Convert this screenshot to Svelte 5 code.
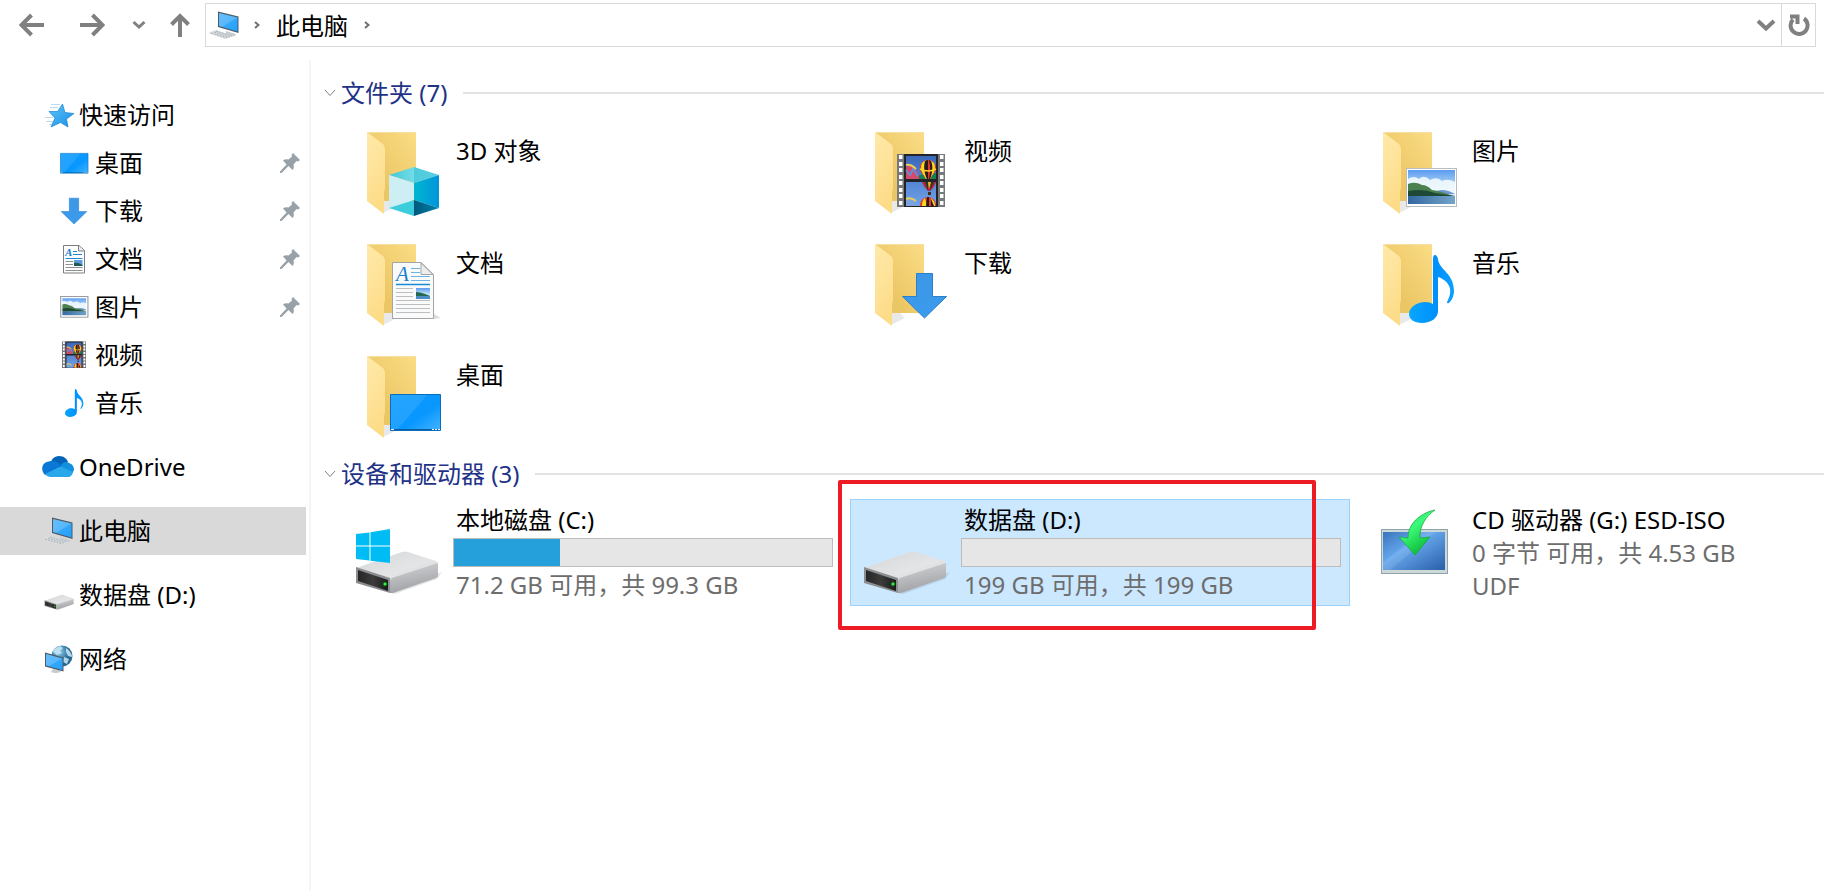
<script lang="ts">
	type Place = { name: string; icon: string; child?: boolean; pinned?: boolean; gap?: boolean; active?: boolean };
	type Drive = { name: string; icon: string; used?: number; lines: string[]; selected?: boolean; marked?: boolean };

	const places: Place[] = [
		{ name: '快速访问', icon: 'star' },
		{ name: '桌面', icon: 'desktop', child: true, pinned: true },
		{ name: '下载', icon: 'download', child: true, pinned: true },
		{ name: '文档', icon: 'document', child: true, pinned: true },
		{ name: '图片', icon: 'picture', child: true, pinned: true },
		{ name: '视频', icon: 'film', child: true },
		{ name: '音乐', icon: 'music', child: true },
		{ name: 'OneDrive', icon: 'cloud', gap: true },
		{ name: '此电脑', icon: 'pc', gap: true, active: true },
		{ name: '数据盘 (D:)', icon: 'drive', gap: true },
		{ name: '网络', icon: 'network', gap: true }
	];

	const folders = [
		{ name: '3D 对象', icon: 'cube' },
		{ name: '视频', icon: 'film' },
		{ name: '图片', icon: 'picture' },
		{ name: '文档', icon: 'document' },
		{ name: '下载', icon: 'download' },
		{ name: '音乐', icon: 'music' },
		{ name: '桌面', icon: 'desktop' }
	];

	const drives: Drive[] = [
		{ name: '本地磁盘 (C:)', icon: 'system', used: 28, lines: ['71.2 GB 可用，共 99.3 GB'] },
		{ name: '数据盘 (D:)', icon: 'drive', used: 0, lines: ['199 GB 可用，共 199 GB'], selected: true, marked: true },
		{ name: 'CD 驱动器 (G:) ESD-ISO', icon: 'disc', lines: ['0 字节 可用，共 4.53 GB', 'UDF'] }
	];

	// the sidebar shows the same art as the tiles, cropped to the part without the folder
	const crops: Record<string, string> = {
		desktop: '39 35 58 58',
		download: '42 32 55 55',
		picture: '39 35 58 58',
		film: '34 25 64 64',
		music: '29 14 78 78',
		drive: '2 2 90 90'
	};

	let showFolders = $state(true);
	let showDrives = $state(true);
</script>

{#snippet folderArt()}
	<path d="M36 89 L50 82 L44 76 L36 77Z" fill="#e9e9e9" />
	<path d="M20 8H69V77H20Z" fill="url(#folder-back)" />
	<path d="M20 8H69V9H20Z" fill="#f6dfa0" />
	<path d="M20 8 L36 20 Q38 22 38 25 V64 L37 68 V90 L20 77Z" fill="url(#folder-front)" />
{/snippet}

{#snippet driveArt()}
	<path d="M43 88 L90 69 L95 67 L90 74 L48 89Z" fill="#000" opacity="0.1" />
	<path d="M9 63 L55 47 Q58 46 61 47 L89 56 Q91 57 91 59 L43 75Z" fill="url(#drive-top)" />
	<path d="M43 76 Q43 73 48 72 L91 58 V71 Q91 72 89 73 L46 88 L43 88Z" fill="url(#drive-side)" />
	<path d="M9 62 L43 73 V88 L9 78Z" fill="#8b8d90" />
	<path d="M11 65 L41 75 V86 L11 76Z" fill="url(#drive-front)" />
	<circle cx="38" cy="79" r="2.4" fill="#0a5c12" />
	<circle cx="38" cy="79" r="1.5" fill="#35f04a" />
{/snippet}

{#snippet balloon(x: number, y: number)}
	<g transform="translate({x} {y})">
		<path d="M-8 0 A8 8 0 0 1 8 0 C8 5 3 8 2 11 H-2 C-3 8 -8 5 -8 0Z" fill="#e8372c" />
		<path d="M-6 -5 C-9 2 -4 7 -2 11 H-1 C-4 5 -5 -2 -2 -8Z M6 -5 C9 2 4 7 2 11 H1 C4 5 5 -2 2 -8Z" fill="#ffd91c" />
		<path d="M-3 -7 C-5 1 -2 8 -1 11 H0 V-8Z" fill="#241d1b" />
		<path d="M1 -8 C3 0 2 6 1 11 H2 C5 4 5 -3 3 -7Z" fill="#241d1b" />
		<path d="M-8 1 Q0 5 8 1" stroke="#ffd91c" stroke-width="1.5" fill="none" />
	</g>
{/snippet}

{#snippet art(name: string)}
	{#if name === 'cube'}
		<path d="M67 43 L92 51 L67 59 L42 51Z" fill="url(#cube-top)" />
		<path d="M42 51 L67 59 V76 L42 84Z" fill="#cdeff3" />
		<path d="M67 59 L92 51 V84 L67 76Z" fill="url(#cube-right)" />
		<path d="M42 84 L67 76 V92Z" fill="#3ccddd" />
		<path d="M67 76 L92 84 L67 92Z" fill="url(#cube-dark)" />
	{:else if name === 'film'}
		<path d="M42 30H90V83H42Z" fill="#77797b" />
		<path d="M49 30H83V83H49Z" fill="#232427" />
		<path d="M51 32H81V55H51Z M51 58H81V82H51Z" fill="url(#film-sky)" />
		<path d="M51 50 Q57 44 64 51 L81 49 V55 H51Z" fill="#148053" />
		<path d="M51 43 L55 41 L60 44 L64 51 V55 H51Z" fill="#d44a69" />
		<path d="M51 46 L55 51 L58 45 L63 52" stroke="#6a8ad5" stroke-width="2" fill="none" />
		<path d="M51 41 Q56 40 61 45" stroke="#e9cf58" stroke-width="2" fill="none" />
		{@render balloon(73, 44)}
		<path d="M67 58H81Q79 64 75 67H73Q69 63 67 58Z" fill="#ba2438" />
		<path d="M70 58H73V67Z M76 58H79L75 67Z" fill="#1f3d22" />
		<path d="M73 58H76L74 65Z" fill="#eebb29" />
		<path d="M73 68H76V71H73Z" fill="#442b1b" />
		<path d="M51 75 Q56 73 61 78 L64 82H51Z" fill="#7ca4dc" />
		<path d="M51 75 Q56 73 61 77" stroke="#e9cf58" stroke-width="2" fill="none" />
		<path d="M65 82 C65 70 81 70 81 82Z" fill="#e8372c" />
		<path d="M67 82 Q67 76 70 74 L72 82Z M76 74 Q80 77 80 82H77Z" fill="#ffd91c" />
		<path d="M72 73H74V82H71Z M76 75L79 82H76Z" fill="#241d1b" />
		{#each [31, 38, 44, 51, 57, 64, 70, 77] as y}
			<path d="M44 {y}h3.5v4h-3.5Z" fill="#fff" />
			<path d="M85 {y}h3.5v4h-3.5Z" fill="#fff" />
		{/each}
	{:else if name === 'picture'}
		<path d="M43 44H94V83H43Z" fill="#b9bbbd" />
		<path d="M44 45H93V82H44Z" fill="#fff" />
		<path d="M45 46H92V80H45Z" fill="url(#picture-sky)" />
		<path d="M45 55 Q51 51 56 55 Q61 50 67 56 Q74 52 79 57 Q85 54 92 58 V70H45Z" fill="#f2f9fd" opacity="0.9" />
		<path d="M69 70 Q78 62 92 70Z" fill="#6f97d2" />
		<path d="M45 60 Q52 57 59 61 Q64 61 69 66 Q78 67 90 72 H45Z" fill="#4b8151" />
		<path d="M45 67 Q60 64 72 69 L92 72 H45Z" fill="#1f4937" />
		<path d="M45 72H92V80H45Z" fill="url(#picture-sea)" />
	{:else if name === 'document'}
		<path d="M87 78 L94 82 L87 83Z" fill="#ddd" />
		<path d="M45.5 26.5H74L86.5 38.5V82.5H45.5Z" fill="#fafafa" stroke="#a3a5a8" />
		<path d="M74 27V38.5H86Z" fill="#ededed" stroke="#a3a5a8" />
		<text x="49" y="45" class="doc-letter">A</text>
		<path d="M64 32.5H73 M64 36.5H73 M64 40.5H83 M64 44.5H83" stroke="#6db4e6" />
		<path d="M49 48.5H83" stroke="#1b8ad6" stroke-width="1.5" />
		<path d="M49 52.5H66 M49 56.5H66 M49 60.5H66 M49 64.5H83 M49 68.5H83 M49 72.5H83 M49 76.5H83" stroke="#bcbfc2" />
		<path d="M69 52H83V63H69Z" fill="url(#picture-sky)" />
		<path d="M69 56 Q74 56 83 60 H69Z" fill="#26694f" />
		<path d="M69 60H83V63H69Z" fill="#4d8ec4" />
	{:else if name === 'download'}
		<path d="M61.5 37.5H77.5V60.5H91.5L69.5 82 L47.5 60.5H61.5Z" fill="url(#arrow-blue)" stroke="#2b7fcf" />
	{:else if name === 'music'}
		<path d="M70 23 Q70 19 72 19 Q74 19 75 23 C76 34 91 37 91 55 Q91 62 86 67 Q84 68 84 66 C92 52 84 44 75 41 V75 C75 82 68 87 59 87 C51 87 46 83 46 78 C46 71 54 66 62 66 Q67 66 70 68Z" fill="url(#note-blue)" />
	{:else if name === 'desktop'}
		<path d="M43.5 46.5H93.5V82.5H43.5Z" fill="url(#screen-blue)" stroke="#0b6cb8" />
		<path d="M44 47H80L50 82H44Z" fill="#fff" opacity="0.1" />
		<path d="M44 81.5H93" stroke="#0b5b9d" />
		<path d="M44 81.5H47 M85 81.5H87 M88 81.5H90 M91 81.5H93" stroke="#e9f5ff" />
	{:else if name === 'drive'}
		{@render driveArt()}
	{:else if name === 'system'}
		{@render driveArt()}
		<path d="M9 29 L22.5 27.5 V40.5 H9Z M23.5 27.2 L43 24 V40.5 H23.5Z M9 41.5 H22.5 V55.5 L9 54Z M23.5 41.5 H43 V58 L23.5 55.7Z" fill="#00bcf4" />
	{:else if name === 'disc'}
		<path d="M18 24H85V69H18Z" fill="#8fa3a8" />
		<path d="M19 25H84V68H19Z" fill="#ccd9d8" />
		<path d="M20 27H82V65H20Z" fill="url(#disc-screen)" />
		<path d="M20 58 L58 27 H72 L27 65 H20Z" fill="#fff" opacity="0.1" />
		<path d="M72 5 C61 7 45 16 45 33 L36 32 L52 50 L67 32 L57 33 C56 22 63 11 72 5Z" fill="url(#arrow-green)" stroke="#12a640" stroke-width="0.7" />
	{/if}
{/snippet}

{#snippet monitor()}
	<path d="M18 22 L28 25 L27 27 Q21 28 18 25Z" fill="#c6cbd0" />
	<path d="M10 2.5 L30.5 7.5 V24 L10 18Z" fill="#4d5a64" />
	<path d="M11 4 L29.5 8.5 V22.5 L11 17Z" fill="url(#monitor-blue)" />
	<path d="M11 4 L29.5 8.5 L14 18 L11 17Z" fill="#fff" opacity="0.18" />
	<path d="M0 24 L8 21 L26 27 L17 30Z" fill="#d9dde0" />
	<path d="M3 24 L20 29 M6 23 L22 28 M8 22 L24 27" stroke="#a0a8ae" stroke-width="0.8" stroke-dasharray="2 1" />
{/snippet}

{#snippet smallIcon(name: string)}
	<svg class="small-icon" viewBox={crops[name] ?? '0 0 32 32'} aria-hidden="true">
		{#if name === 'star'}
			<path d="M9 5.5H18 M8 8.5H16 M3 18.5H11 M4 22.5H11 M7 25.5H10" stroke="#b9dcf4" stroke-width="1" />
			<path d="M20.5 5 L23 13.5 L32 14.5 L24.5 20 L26 28 L18.500 23.5 L9 28 L13 19 L7 12.5 L15.5 12.5Z" fill="url(#star-blue)" stroke="#1b83cf" stroke-width="0.7" />
		{:else if name === 'document'}
			<path d="M5.5 2.5H21 L26.5 7.5 V30 H5.5Z" fill="#fdfdfd" stroke="#7b7e81" />
			<path d="M20.500 3V8H26" fill="#ededed" stroke="#7b7e81" />
			<text x="7" y="13" class="doc-letter small">A</text>
			<path d="M15 8.5H19 M15 11.5H24 M7.5 15.5H24.5" stroke="#1b8ad6" />
			<path d="M7.5 18.5H15 M7.5 21.5H15 M7.5 24.5H24.5 M7.5 27.5H24.5" stroke="#8f9295" />
			<path d="M16 17H24.5V23H16Z" fill="#5b9be0" />
			<path d="M16 20 Q20 19 24.5 22 V23H16Z" fill="#1f5a55" />
		{:else if name === 'cloud'}
			<path d="M9 12 C9 8 13 5 17 5 C22 5 25 8 26 11 L20 15 L9 12Z" fill="#0364b8" />
			<path d="M20 13 C21 11 25 10 27 12 C30 13 32 15 32 19 L30 23 L16 16Z" fill="#148fdf" />
			<path d="M3 24 C-2 19 0 11 7 10.5 C12 9 16 11 20 15 L3 24Z" fill="#0a78d4" />
			<path d="M3 23 L19 15.5 L31 21 C30 25 28 26 26 26 H8 Q5 26 3 23Z" fill="#28a8ea" />
		{:else if name === 'pc'}
			{@render monitor()}
		{:else if name === 'network'}
			<circle cx="20" cy="13" r="10.5" fill="url(#globe)" />
			<path d="M12 6 L18 3 L21 5 L18 8 L20 10 L15 12 L11 9Z M24 5 Q30 9 30 14 L26 13 L24 9Z M22 14 L27 16 L25 21 L21 19Z" fill="#c9e5f3" opacity="0.85" />
			<path d="M11 26 L17 27 L19 29 Q13 31 9 29Z" fill="#c6cbd0" />
			<path d="M3 9.5 L21.5 14.5 V28.5 L3 23.5Z" fill="#4d5a64" />
			<path d="M4 11 L20.5 15.5 V27 L4 22.5Z" fill="url(#monitor-blue)" />
			<path d="M4 11 L20.5 15.5 L7 23 L4 22.5Z" fill="#fff" opacity="0.18" />
		{:else}
			{@render art(name)}
			{#if name === 'picture'}
				<path d="M44 45H93V82H44Z" fill="none" stroke="#9a9da0" stroke-width="2" />
				<path d="M46 47H91V80H46Z" fill="none" stroke="#fff" stroke-width="2" />
			{/if}
		{/if}
	</svg>
{/snippet}

{#snippet groupHeader(title: string, count: number, open: boolean, toggle: () => void)}
	<button class="group-header" aria-expanded={open} onclick={toggle}>
		<svg class="group-chevron" viewBox="0 0 12 8" aria-hidden="true"><path d="M1 1 L6 6.5 L11 1" /></svg>
		<span class="label">{title} ({count})</span>
		<span class="rule"></span>
	</button>
{/snippet}

<svg class="defs" width="0" height="0" aria-hidden="true">
	<defs>
		<linearGradient id="folder-back" x1="0" y1="1" x2="1" y2="0"><stop offset="0.3" stop-color="#ebc664" /><stop offset="1" stop-color="#fbdd86" /></linearGradient>
		<linearGradient id="folder-front" x1="0" y1="0" x2="0.3" y2="1"><stop offset="0" stop-color="#ffe9a8" /><stop offset="0.5" stop-color="#fee39a" /><stop offset="1" stop-color="#fddc88" /></linearGradient>
		<linearGradient id="drive-top" x1="0" y1="0" x2="1" y2="1"><stop offset="0" stop-color="#d4d5d7" /><stop offset="0.6" stop-color="#e4e5e7" /><stop offset="1" stop-color="#cfd0d2" /></linearGradient>
		<linearGradient id="drive-side" x1="0" y1="0" x2="0.3" y2="1"><stop offset="0" stop-color="#d6d7d9" /><stop offset="1" stop-color="#9fa1a4" /></linearGradient>
		<linearGradient id="drive-front"><stop offset="0" stop-color="#262626" /><stop offset="0.5" stop-color="#3c3c3c" /><stop offset="1" stop-color="#1b1b1b" /></linearGradient>
		<linearGradient id="cube-top"><stop offset="0" stop-color="#3fc8d8" /><stop offset="0.5" stop-color="#74dce6" /><stop offset="0.51" stop-color="#4dcbdc" /><stop offset="1" stop-color="#5acfe0" /></linearGradient>
		<linearGradient id="cube-right"><stop offset="0" stop-color="#00b6d0" /><stop offset="1" stop-color="#0094da" /></linearGradient>
		<linearGradient id="cube-dark"><stop offset="0" stop-color="#00587c" /><stop offset="1" stop-color="#0083ae" /></linearGradient>
		<linearGradient id="film-sky" x1="0" y1="0" x2="0" y2="1"><stop offset="0" stop-color="#3b67b9" /><stop offset="1" stop-color="#6fa3ea" /></linearGradient>
		<linearGradient id="picture-sky" x1="0" y1="0" x2="0" y2="1"><stop offset="0" stop-color="#5a9bf0" /><stop offset="0.5" stop-color="#b9dcf7" /><stop offset="1" stop-color="#e3f2fa" /></linearGradient>
		<linearGradient id="picture-sea"><stop offset="0" stop-color="#33679f" /><stop offset="1" stop-color="#75a5c9" /></linearGradient>
		<linearGradient id="arrow-blue" x1="0" y1="0" x2="0" y2="1"><stop offset="0" stop-color="#3d97e6" /><stop offset="1" stop-color="#3a9bed" /></linearGradient>
		<linearGradient id="note-blue"><stop offset="0" stop-color="#07a7ff" /><stop offset="0.6" stop-color="#0090fb" /><stop offset="1" stop-color="#0aa0ff" /></linearGradient>
		<linearGradient id="screen-blue" x1="0" y1="0" x2="1" y2="1"><stop offset="0" stop-color="#0c9bff" /><stop offset="0.6" stop-color="#0797ff" /><stop offset="1" stop-color="#45b3ff" /></linearGradient>
		<linearGradient id="disc-screen" x1="0" y1="0" x2="1" y2="1"><stop offset="0" stop-color="#3974bd" /><stop offset="0.4" stop-color="#66a7ec" /><stop offset="1" stop-color="#2a5ea8" /></linearGradient>
		<linearGradient id="arrow-green" x1="0" y1="0" x2="0.6" y2="1"><stop offset="0" stop-color="#1fce55" /><stop offset="0.45" stop-color="#3dfa7a" /><stop offset="1" stop-color="#08b62f" /></linearGradient>
		<linearGradient id="monitor-blue" x1="0" y1="0" x2="1" y2="1"><stop offset="0" stop-color="#45b0fb" /><stop offset="1" stop-color="#23a0fb" /></linearGradient>
		<linearGradient id="star-blue" x1="0" y1="0" x2="1" y2="1"><stop offset="0" stop-color="#5fc3fb" /><stop offset="1" stop-color="#1990e6" /></linearGradient>
		<radialGradient id="globe" cx="0.35" cy="0.3"><stop offset="0" stop-color="#9fd0ea" /><stop offset="0.6" stop-color="#4b93bd" /><stop offset="1" stop-color="#286a92" /></radialGradient>
	</defs>
</svg>

<div class="explorer">
	<header class="toolbar">
		<button class="nav wide" aria-label="后退">
			<svg width="26" height="24" viewBox="0 0 26 24"><path d="M25 12H3 M12.5 2 L2.5 12 L12.5 22" /></svg>
		</button>
		<button class="nav wide" aria-label="前进">
			<svg width="26" height="24" viewBox="0 0 26 24"><path d="M1 12H23 M13.5 2 L23.5 12 L13.5 22" /></svg>
		</button>
		<button class="nav recent" aria-label="最近浏览的位置">
			<svg width="14" height="10" viewBox="0 0 14 10"><path d="M1.5 2 L7 7 L12.5 2" /></svg>
		</button>
		<button class="nav up" aria-label="向上">
			<svg width="22" height="24" viewBox="0 0 22 24"><path d="M11 24V3 M2.5 11.5 L11 3 L19.5 11.5" /></svg>
		</button>
		<div class="address">
			{@render smallIcon('pc')}
			<svg class="crumb" viewBox="0 0 6 8" aria-hidden="true"><path d="M1 1 L4.5 4 L1 7" /></svg>
			<a class="crumb-name" href="#pc">此电脑</a>
			<svg class="crumb" viewBox="0 0 6 8" aria-hidden="true"><path d="M1 1 L4.5 4 L1 7" /></svg>
			<button class="nav history" aria-label="历史记录">
				<svg width="20" height="14" viewBox="0 0 20 14"><path d="M2 3 L10 10.5 L18 3" /></svg>
			</button>
			<button class="nav refresh" aria-label="刷新">
				<svg width="22" height="24" viewBox="0 0 22 24"><path d="M16 5.5 A8.5 8.5 0 1 1 5 6.5 M2 3.5H9.5 V11" /></svg>
			</button>
		</div>
	</header>

	<div class="body">
		<nav class="sidebar">
			{#each places as place}
				<a class="place" class:child={place.child} class:gap={place.gap} class:active={place.active} href="#{place.icon}">
					{@render smallIcon(place.icon)}
					<span class="label">{place.name}</span>
					{#if place.pinned}
						<svg class="pin" viewBox="0 0 20 20" aria-hidden="true"><path d="M13 0 L20 7 L18 8.5 L16.5 8 L13.5 11.5 Q14.5 15 12.5 17 L8.5 13 L1.5 20 L0 20 V18.5 L6.5 11.5 L3 7.5 Q5.5 5.5 8.5 6.5 L12 3.5 L11.5 2Z" /></svg>
					{/if}
				</a>
			{/each}
		</nav>

		<main class="content">
			<section>
				{@render groupHeader('文件夹', folders.length, showFolders, () => (showFolders = !showFolders))}
				{#if showFolders}
					<div class="tiles">
						{#each folders as folder}
							<a class="tile folder" href="#{folder.icon}">
								<svg class="large-icon" viewBox="0 0 96 96" aria-hidden="true">
									{@render folderArt()}
									{@render art(folder.icon)}
								</svg>
								<span class="info"><span class="line">{folder.name}</span></span>
							</a>
						{/each}
					</div>
				{/if}
			</section>

			<section>
				{@render groupHeader('设备和驱动器', drives.length, showDrives, () => (showDrives = !showDrives))}
				{#if showDrives}
					<div class="tiles">
						{#each drives as drive}
							<a class="tile" class:selected={drive.selected} href="#{drive.icon}">
								<svg class="large-icon" viewBox="0 0 96 96" aria-hidden="true">{@render art(drive.icon)}</svg>
								<span class="info">
									<span class="line">{drive.name}</span>
									{#if drive.used !== undefined}
										<span class="usage" role="meter" aria-label={drive.name} aria-valuemin="0" aria-valuemax="100" aria-valuenow={drive.used}>
											<span class="used" style="width: {drive.used}%"></span>
										</span>
									{/if}
									{#each drive.lines as line}
										<span class="line detail">{line}</span>
									{/each}
								</span>
								{#if drive.marked}<span class="mark"></span>{/if}
							</a>
						{/each}
					</div>
				{/if}
			</section>
		</main>
	</div>
</div>

<style>
	:global(body) { margin: 0; background: #fff; }
	.defs { position: absolute; }
	.explorer {
		display: flex; flex-direction: column; min-height: 100vh; overflow: hidden;
		font-family: "Noto Sans", "Noto Sans CJK SC", sans-serif; font-size: 24px; line-height: 33px; color: #000;
	}
	a { color: inherit; text-decoration: none; }
	button { font: inherit; color: inherit; background: none; border: 0; padding: 0; cursor: pointer; }
	.label { padding-bottom: 2px; }

	.toolbar { display: flex; align-items: center; padding: 3px 8px 13px 2px; }
	.nav { display: flex; align-items: center; justify-content: center; height: 44px; flex: none; }
	.nav svg { fill: none; stroke: #808080; stroke-width: 4; }
	.wide { width: 60px; }
	.recent { width: 33px; }
	.recent svg { stroke-width: 3; }
	.up { width: 50px; }
	.address {
		flex: 1; display: flex; align-items: center; box-sizing: border-box; height: 44px;
		padding-left: 2px; border: 1px solid #d9d9d9;
	}
	.crumb { width: 6px; height: 8px; margin: 0 14px; fill: none; stroke: #707070; stroke-width: 2; }
	.crumb-name { padding: 0 2px; }
	.history { width: 30px; margin-left: auto; }
	.refresh { width: 34px; border-left: 1px solid #d9d9d9; }

	.body { flex: 1; display: flex; }
	.sidebar {
		flex: none; display: flex; flex-direction: column; box-sizing: border-box; width: 311px;
		padding: 31px 3px 0 0; border-right: 2px solid #f5f5f5;
	}
	.place { display: flex; align-items: center; gap: 5px; height: 48px; padding: 0 6px 0 42px; }
	.place:hover { background: #e5f3ff; }
	.child { padding-left: 58px; }
	.gap { margin-top: 16px; }
	.active, .active:hover { background: #d9d9d9; }
	.small-icon { width: 32px; height: 32px; flex: none; }
	.pin { width: 20px; height: 20px; margin-left: auto; fill: #97a1a8; }

	.content { flex: 1; min-width: 0; padding: 8px 0 0 13px; }
	.group-header { display: flex; align-items: center; width: 100%; height: 50px; color: #1e3287; }
	.group-chevron { width: 12px; height: 8px; margin-right: 5px; fill: none; stroke: #808080; stroke-width: 1; }
	.rule { flex: 1; height: 2px; margin-left: 16px; background: #e3e3e3; }
	.tiles { display: grid; grid-template-columns: repeat(3, 500px); gap: 5px 8px; padding-left: 18px; }
	.tile {
		position: relative; display: flex; gap: 10px; box-sizing: border-box; height: 107px;
		padding: 3px 8px 3px 4px; border: 1px solid transparent;
	}
	.tile:hover { background: #e5f3ff; }
	.selected, .selected:hover { background: #cce8ff; border-color: #99d1ff; }
	.large-icon { width: 96px; height: 96px; margin-top: 2px; flex: none; }
	.info { flex: 1; display: flex; flex-direction: column; }
	.folder .info { padding-top: 12px; }
	.line { padding-left: 3px; white-space: nowrap; }
	.detail { color: #6d6d6d; }
	.usage { display: block; box-sizing: border-box; height: 29px; margin: 2px 0 1px; border: 1px solid #bcbcbc; background: #e6e6e6; }
	.used { display: block; height: 100%; background: #26a0da; }
	.doc-letter { font: italic 21px "Liberation Serif", serif; fill: #1b7fd0; }
	.doc-letter.small { font-size: 11px; font-weight: bold; }
	/* red callout drawn over the drive tile */
	.mark {
		position: absolute; top: -20px; left: -13px; box-sizing: border-box; width: 478px; height: 150px;
		border: 4px solid #ed1c24; border-radius: 2px; pointer-events: none;
	}
</style>
